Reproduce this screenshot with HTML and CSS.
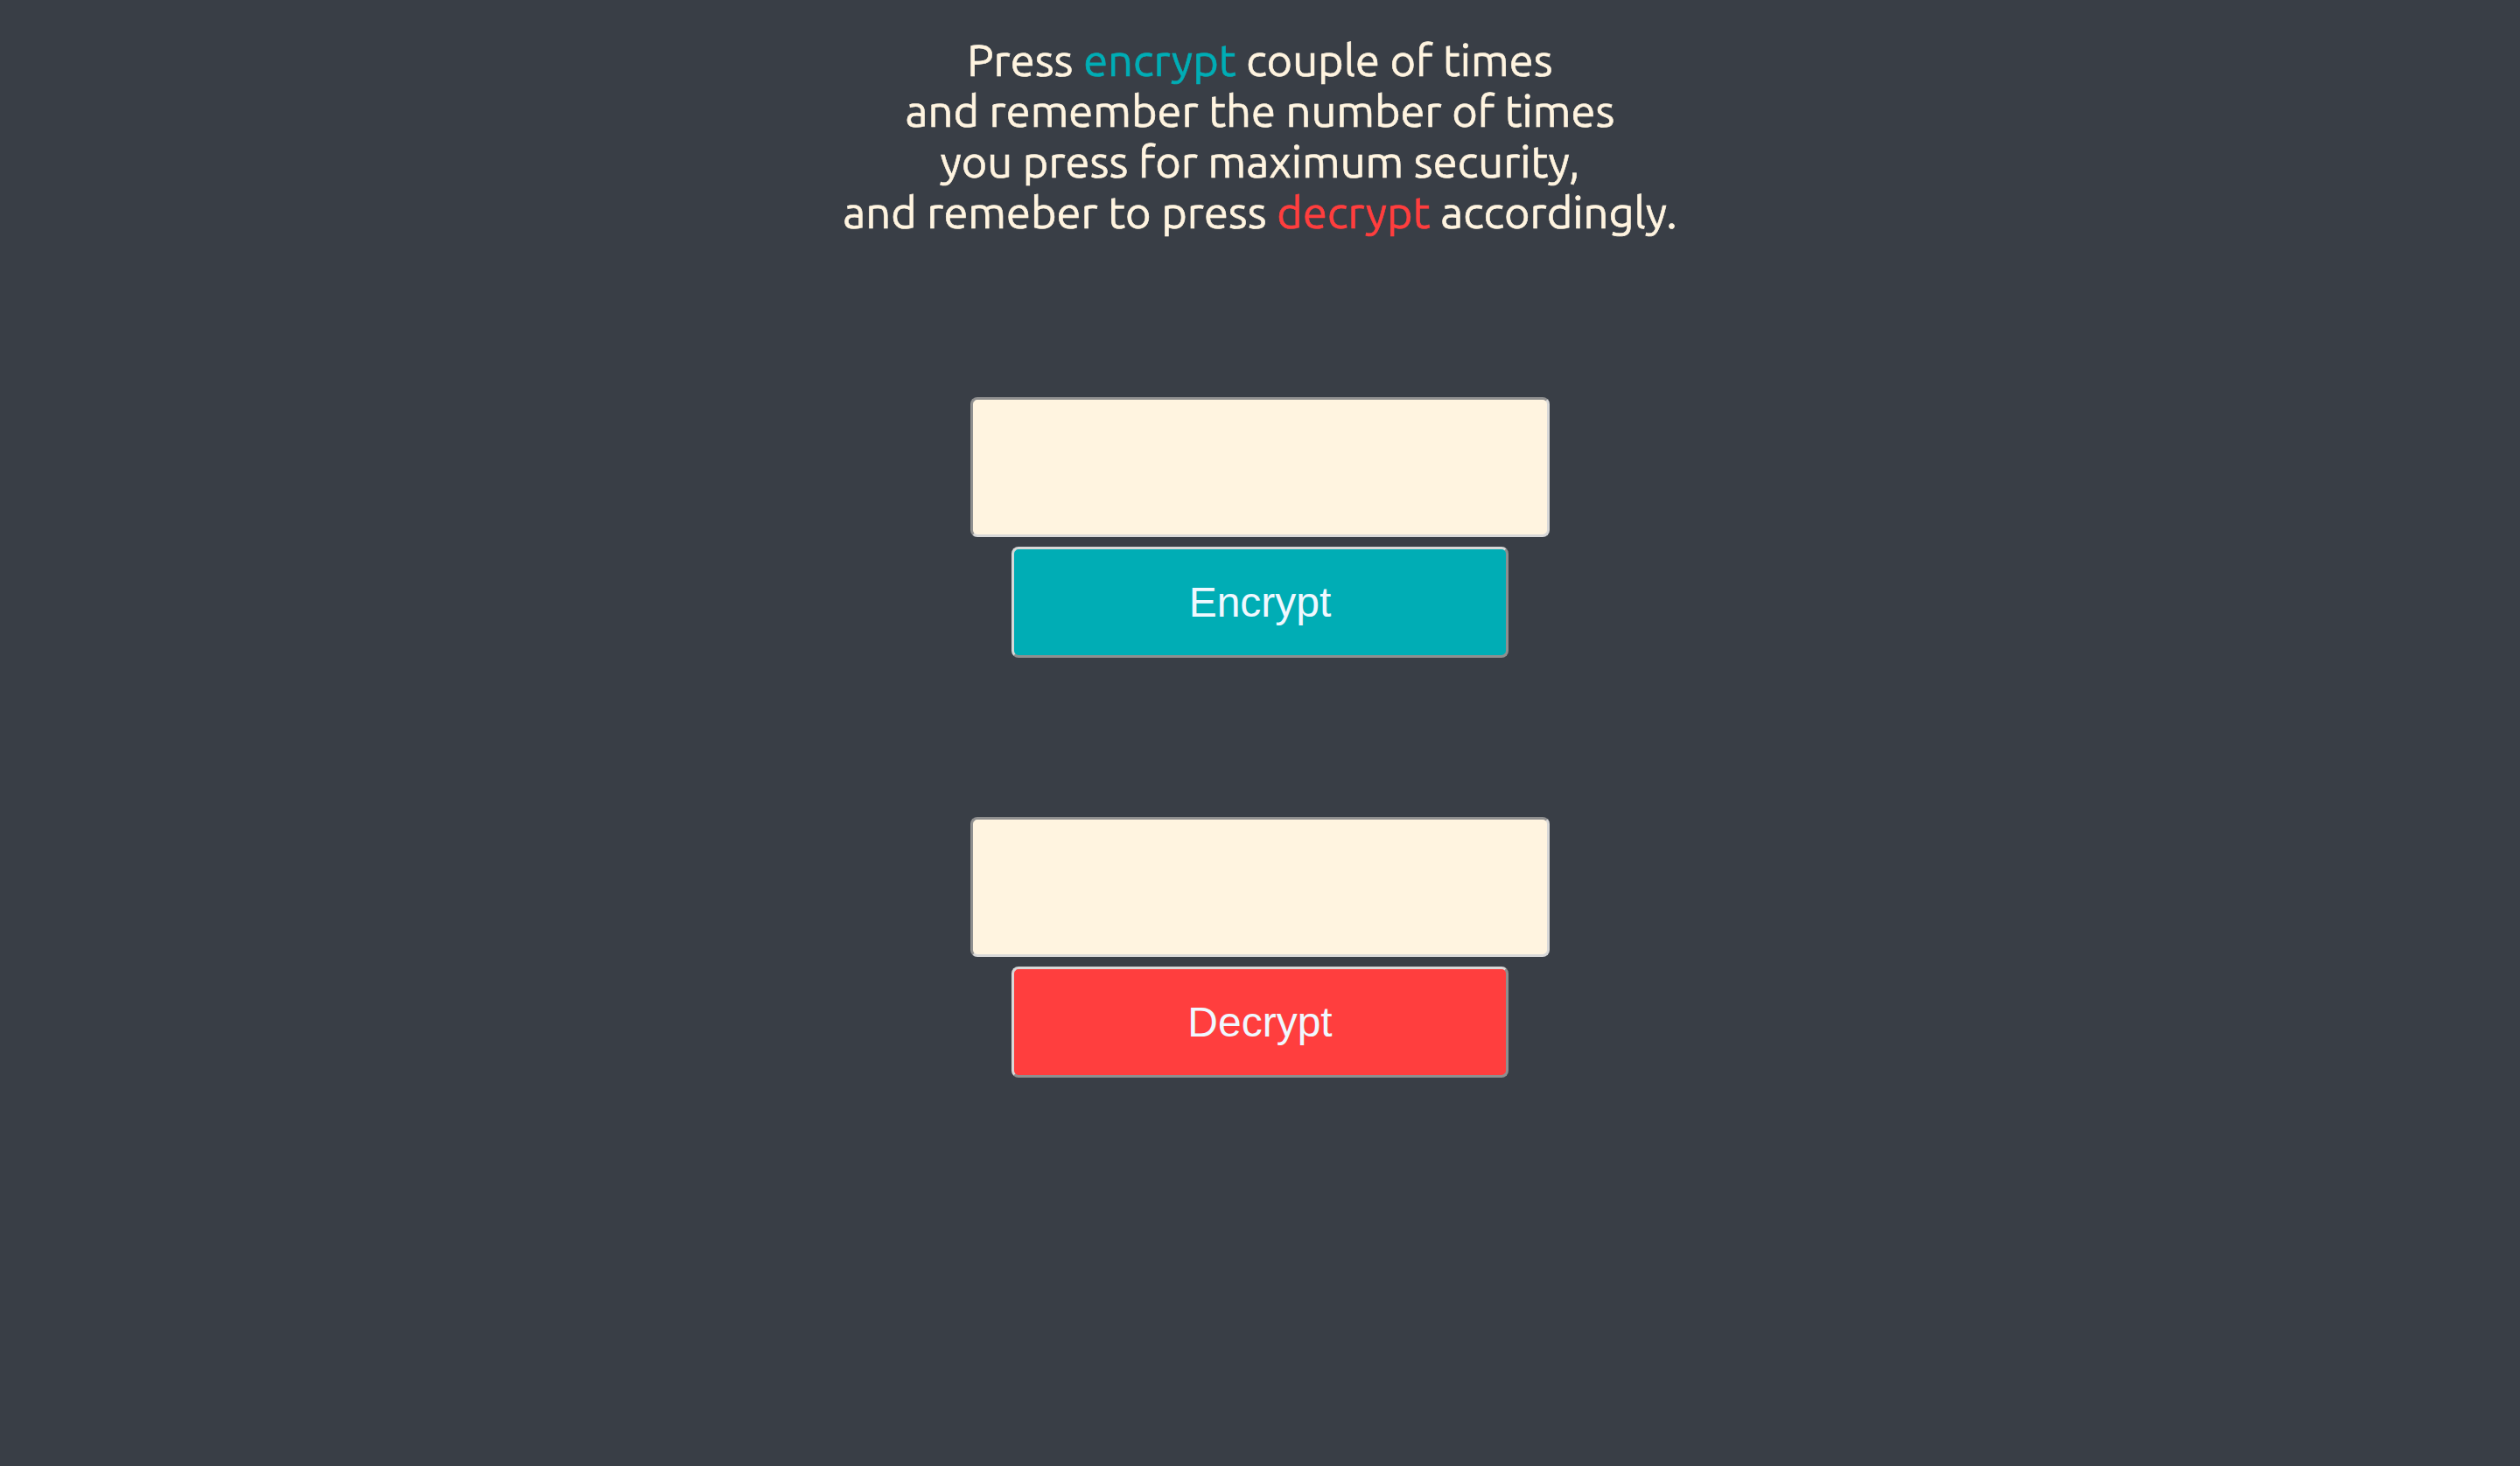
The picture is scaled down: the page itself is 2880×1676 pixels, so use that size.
FILE: index.html
```html
<!DOCTYPE html>
<html lang="en">
<head>
<meta charset="utf-8">
<title>Encrypt / Decrypt</title>
<link rel="stylesheet" href="styles.css">
</head>
<body>
<main class="page">
  <p class="intro">
    Press <span class="hl-encrypt">encrypt</span> couple of times<br>
    and remember the number of times<br>
    you press for maximum security,<br>
    and remeber to press <span class="hl-decrypt">decrypt</span> accordingly.
  </p>
  <section class="cipher">
    <textarea class="field" aria-label="Text to encrypt"></textarea>
    <button class="btn btn-encrypt" type="button">Encrypt</button>
  </section>
  <section class="cipher">
    <textarea class="field" aria-label="Text to decrypt"></textarea>
    <button class="btn btn-decrypt" type="button">Decrypt</button>
  </section>
</main>
</body>
</html>
```

FILE: styles.css
```css
html, body {
  margin: 0;
  padding: 0;
  height: 100%;
}

body {
  background: #393e46;
}

.page {
  display: flex;
  flex-direction: column;
  align-items: center;
  gap: 182px;
  padding-top: 40px;
  box-sizing: border-box;
  min-height: 100%;
}

.intro {
  margin: 0;
  font-family: Ubuntu, Lato, "Noto Sans", sans-serif;
  font-size: 50.6px;
  font-weight: 400;
  line-height: 58px;
  color: #fff4e0;
  text-align: center;
  -webkit-text-stroke: 0.6px #fff4e0;
}

.hl-encrypt {
  color: #00adb5;
  -webkit-text-stroke-color: #00adb5;
}

.hl-decrypt {
  color: #ff3e3e;
  -webkit-text-stroke-color: #ff3e3e;
}

.cipher {
  display: flex;
  flex-direction: column;
  align-items: center;
  gap: 11px;
}

.field {
  display: block;
  box-sizing: border-box;
  width: 662px;
  height: 160px;
  margin: 0;
  padding: 0;
  resize: none;
  background: #fff4e0;
  border-width: 3px;
  border-style: solid;
  border-color: #8f8f8f #d8d8d8 #d8d8d8 #8f8f8f;
  border-radius: 8px;
  outline: none;
}

.btn {
  box-sizing: border-box;
  width: 568px;
  height: 127px;
  margin: 0;
  padding: 0;
  font-family: "Liberation Sans", Arial, sans-serif;
  font-size: 48px;
  color: #f0f8ff;
  border-width: 3px;
  border-style: solid;
  border-color: #d8d8d8 #8f8f8f #8f8f8f #d8d8d8;
  border-radius: 8px;
  cursor: pointer;
}

.btn-encrypt {
  background: #00adb5;
}

.btn-decrypt {
  background: #ff3e3e;
}
```
